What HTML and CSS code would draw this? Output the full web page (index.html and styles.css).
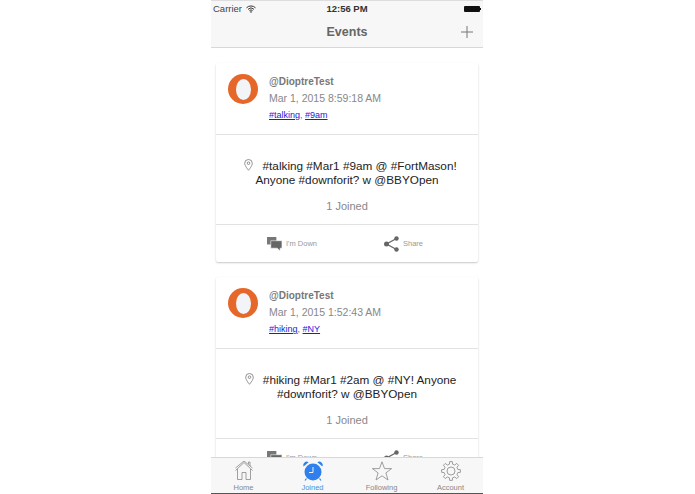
FILE: index.html
```html
<!DOCTYPE html>
<html lang="en">
  <head>
    <meta charset="UTF-8" />
    <meta name="viewport" content="width=device-width, initial-scale=1.0" />
    <title>Events</title>
    <link rel="stylesheet" href="styles.css">
  </head>
  <body>
    <div class="phone">
      <!-- Status bar + nav -->
      <div class="header">
        <div class="status">
          <div class="status-left">
            <span>Carrier</span>
            <svg class="wifi" width="10" height="8" viewBox="0 0 10 8">
              <path d="M.5 2.800a6.400 6.400 0 0 1 9 0M2 4.300a4.300 4.300 0 0 1 6 0M3.400 5.700a2.200 2.200 0 0 1 3.200 0" fill="none" stroke="#333" stroke-width="1"/>
              <path d="M5 8 3.900 6.700a1.600 1.600 0 0 1 2.200 0z" fill="#333"/>
            </svg>
          </div>
          <span class="status-time">12:56 PM</span>
          <div class="battery"><span class="battery-cap"></span></div>
        </div>
        <div class="nav">
          <span class="nav-title">Events</span>
          <svg class="nav-add" width="12" height="12" viewBox="0 0 12 12">
            <path d="M6 0v12M0 6h12" stroke="#777" stroke-width="1" fill="none"/>
          </svg>
        </div>
      </div>

      <!-- Events list -->
      <div class="content">
        <div class="card">
          <div class="card-top">
            <div class="avatar"><span class="avatar-hole"></span></div>
            <div class="meta">
              <div class="user">@DioptreTest</div>
              <div class="date">Mar 1, 2015 8:59:18 AM</div>
              <div class="tags"><a href="#">#talking</a>, <a href="#">#9am</a></div>
            </div>
          </div>
          <div class="card-body">
            <p class="message">
              <svg class="pin" width="9" height="12" viewBox="0 0 9 12">
                <path d="M4.500.5a3.800 3.800 0 0 0-3.800 3.800c0 2.600 3.800 7 3.800 7s3.800-4.400 3.800-7A3.800 3.800 0 0 0 4.500.5z" fill="none" stroke="#777" stroke-width=".8"/>
                <circle cx="4.500" cy="4.200" r="1.300" fill="none" stroke="#777" stroke-width=".8"/>
              </svg>
              #talking #Mar1 #9am @ #FortMason! Anyone #downforit? w @BBYOpen
            </p>
            <div class="joined">1 Joined</div>
          </div>
          <div class="actions">
            <div class="action action-down">
              <svg width="15" height="14" viewBox="0 0 16 15">
                <path d="M0 0h10v8H0z" fill="#777"/>
                <path d="M4 4h12v8h-2v3l-3-3H4z" fill="#666" stroke="#fff" stroke-width=".6"/>
              </svg>
              <span>I'm Down</span>
            </div>
            <div class="action action-share">
              <svg width="15" height="16" viewBox="0 0 15 16">
                <path d="M12.500 2.500 2.500 8l10 5.500" fill="none" stroke="#666" stroke-width="1.300"/>
                <circle cx="12.500" cy="2.500" r="2.200" fill="#666"/>
                <circle cx="2.500" cy="8" r="2.500" fill="#666"/>
                <circle cx="12.500" cy="13.500" r="2.200" fill="#666"/>
              </svg>
              <span>Share</span>
            </div>
          </div>
        </div>

        <div class="card">
          <div class="card-top">
            <div class="avatar"><span class="avatar-hole"></span></div>
            <div class="meta">
              <div class="user">@DioptreTest</div>
              <div class="date">Mar 1, 2015 1:52:43 AM</div>
              <div class="tags"><a href="#">#hiking</a>, <a href="#">#NY</a></div>
            </div>
          </div>
          <div class="card-body">
            <p class="message">
              <svg class="pin" width="9" height="12" viewBox="0 0 9 12">
                <path d="M4.500.5a3.800 3.800 0 0 0-3.800 3.800c0 2.600 3.800 7 3.800 7s3.800-4.400 3.800-7A3.800 3.800 0 0 0 4.500.5z" fill="none" stroke="#777" stroke-width=".8"/>
                <circle cx="4.500" cy="4.200" r="1.300" fill="none" stroke="#777" stroke-width=".8"/>
              </svg>
              #hiking #Mar1 #2am @ #NY! Anyone #downforit? w @BBYOpen
            </p>
            <div class="joined">1 Joined</div>
          </div>
          <div class="actions">
            <div class="action action-down">
              <svg width="15" height="14" viewBox="0 0 16 15">
                <path d="M0 0h10v8H0z" fill="#777"/>
                <path d="M4 4h12v8h-2v3l-3-3H4z" fill="#666" stroke="#fff" stroke-width=".6"/>
              </svg>
              <span>I'm Down</span>
            </div>
            <div class="action action-share">
              <svg width="15" height="16" viewBox="0 0 15 16">
                <path d="M12.500 2.500 2.500 8l10 5.500" fill="none" stroke="#666" stroke-width="1.300"/>
                <circle cx="12.500" cy="2.500" r="2.200" fill="#666"/>
                <circle cx="2.500" cy="8" r="2.500" fill="#666"/>
                <circle cx="12.500" cy="13.500" r="2.200" fill="#666"/>
              </svg>
              <span>Share</span>
            </div>
          </div>
        </div>
      </div>

      <!-- Tab bar -->
      <div class="tabbar">
        <div class="tab">
          <svg width="20" height="20" viewBox="0 0 20 20">
            <path d="M1.500 9.500 10 1.500l8.500 8M3.500 8v10.500h4.500v-7h4v7h4.500V8M1.500 7 10 0l8.500 7M14.500 3V1h1.500v4" fill="none" stroke="#888" stroke-width=".8"/>
          </svg>
          <span>Home</span>
        </div>
        <div class="tab tab-active">
          <svg width="20" height="20" viewBox="0 0 20 20">
            <circle cx="10" cy="11" r="8.500" fill="#2f80ec"/>
            <path d="M.6 5.400a3.400 3.400 0 0 1 5-4.200zM19.400 5.400a3.400 3.400 0 0 0-5-4.200z" fill="#2f80ec"/>
            <path d="M3.500 17.500 2 19.500M16.500 17.500l1.500 2" stroke="#2f80ec" stroke-width="1.200"/>
            <path d="M10 6v5.500H6" fill="none" stroke="#fff" stroke-width=".9"/>
          </svg>
          <span>Joined</span>
        </div>
        <div class="tab">
          <svg width="20" height="20" viewBox="0 0 20 20">
            <path d="M10 .8 12.500 7.600H19.600L13.900 11.900 16 19 10 14.800 4 19 6.100 11.900.4 7.600H7.500z" fill="none" stroke="#888" stroke-width=".8"/>
          </svg>
          <span>Following</span>
        </div>
        <div class="tab">
          <svg width="20" height="20" viewBox="0 0 20 20">
            <polygon points="8.420,3.180 8.680,.59 11.320,.59 11.580,3.180 13.710,4.060 15.720,2.410 17.590,4.280 15.940,6.290 16.820,8.420 19.410,8.680 19.410,11.320 16.820,11.580 15.940,13.710 17.590,15.720 15.720,17.590 13.710,15.940 11.580,16.820 11.320,19.410 8.680,19.410 8.420,16.820 6.290,15.940 4.280,17.590 2.410,15.720 4.060,13.710 3.180,11.580 .59,11.320 .59,8.680 3.180,8.420 4.060,6.290 2.410,4.280 4.280,2.410 6.290,4.060" fill="none" stroke="#888" stroke-width=".8" stroke-linejoin="round"/>
            <circle cx="10" cy="10" r="4" fill="none" stroke="#888" stroke-width=".8"/>
          </svg>
          <span>Account</span>
        </div>
      </div>
    </div>
  </body>
</html>
```

FILE: styles.css
```css
/* General styles */
body {
  font-family: "Liberation Sans", Arial, sans-serif;
  background-color: #fff;
  margin: 0;
  padding: 0;
  color: #333;
  overflow: hidden;
}

.phone {
  width: 272px;
  height: 494px;
  margin-left: 211px;
  display: flex;
  flex-direction: column;
  overflow: hidden;
  background-color: #fff;
}

/* Header */
.header {
  flex: none;
  background-color: #f7f7f7;
  border-top: 1px solid #ddd;
  border-bottom: 1px solid #d8d8d8;
  height: 46px;
}

.status {
  height: 15px;
  padding: 0 2px;
  display: flex;
  align-items: center;
  justify-content: space-between;
  font-size: 9.5px;
  color: #444;
}

.status-left {
  width: 80px;
  display: flex;
  align-items: center;
  gap: 4px;
}

.status-time {
  font-weight: bold;
  color: #333;
}

.battery {
  width: 80px;
  display: flex;
  justify-content: flex-end;
}

.battery::before {
  content: "";
  width: 16px;
  height: 6px;
  background-color: #111;
  border-radius: 1px;
}

.battery-cap {
  width: 1px;
  height: 2px;
  margin-top: 2px;
  background-color: #111;
}

.nav {
  height: 31px;
  display: flex;
  align-items: center;
  justify-content: center;
  position: relative;
}

.nav-title {
  font-size: 12.5px;
  font-weight: bold;
  color: #666;
}

.nav-add {
  position: absolute;
  right: 10px;
  top: 10px;
}

/* Cards */
.content {
  flex: 1;
  min-height: 0;
  overflow: hidden;
  padding: 15px 5px 0;
  display: flex;
  flex-direction: column;
  gap: 15px;
}

.card {
  flex: none;
  background-color: #fff;
  border-radius: 2px;
  box-shadow: 0 1px 2px rgba(0, 0, 0, 0.22);
}

.card-top {
  height: 72px;
  display: flex;
  padding: 11px 0 0 12px;
  gap: 11px;
  box-sizing: border-box;
  border-bottom: 1px solid #e2e2e2;
}

.avatar {
  width: 30px;
  height: 30px;
  border-radius: 50%;
  background-color: #e6672a;
  display: flex;
  align-items: center;
  justify-content: center;
}

.avatar-hole {
  width: 15px;
  height: 21px;
  border-radius: 50%;
  background-color: #f2f4f8;
}

.user {
  font-size: 10px;
  font-weight: bold;
  color: #777;
  line-height: 14px;
  margin-top: 1px;
}

.date {
  font-size: 10.5px;
  color: #888;
  line-height: 17px;
  margin-top: 1px;
}

.tags {
  font-size: 9px;
  color: #777;
  line-height: 13px;
  margin-top: 2px;
}

.tags a {
  color: #1a1ae0;
}

.card-body {
  height: 90px;
  box-sizing: border-box;
  padding-top: 24px;
  border-bottom: 1px solid #e2e2e2;
  text-align: center;
}

.message {
  margin: 0 auto;
  width: 225px;
  font-size: 11.75px;
  line-height: 14px;
  color: #222;
  text-indent: 7px;
}

.pin {
  vertical-align: -1px;
  margin-right: 6px;
}

.joined {
  margin-top: 12px;
  font-size: 11px;
  line-height: 14px;
  color: #888;
}

.actions {
  height: 37px;
  display: flex;
  align-items: center;
  padding-left: 51px;
}

.action {
  display: flex;
  align-items: center;
  gap: 4px;
  font-size: 7.5px;
  color: #999;
}

.action-down {
  width: 117px;
}

/* Tab bar */
.tabbar {
  flex: none;
  height: 35px;
  background-color: #f7f7f7;
  border-top: 1px solid #d8d8d8;
  border-bottom: 1px solid #555;
  display: grid;
  grid-template-columns: repeat(4, 69px);
  justify-content: center;
}

.tab {
  display: flex;
  flex-direction: column;
  align-items: center;
  padding-top: 3px;
  font-size: 7.5px;
  line-height: 9px;
  color: #888;
}

.tab svg {
  display: block;
  margin-bottom: 2px;
}

.tab-active {
  color: #4a90e2;
}
```
